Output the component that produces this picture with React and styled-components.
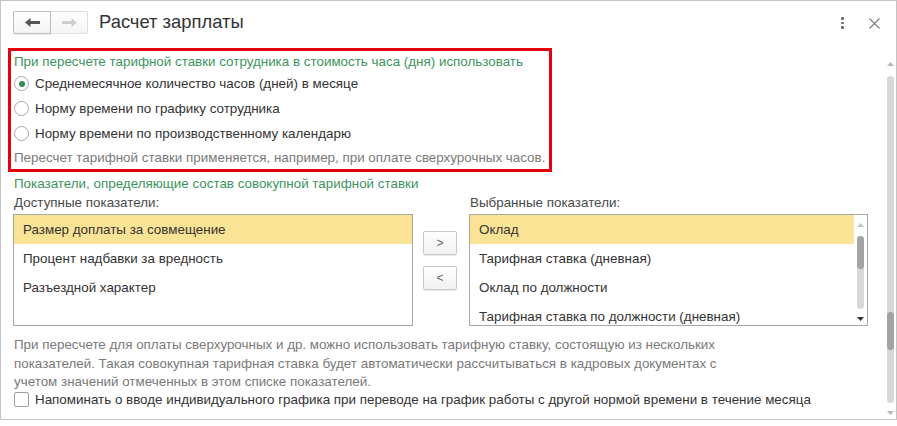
import React from "react";
import styled, { createGlobalStyle } from "styled-components";

const FS = "13.4px";

const GlobalStyle = createGlobalStyle`
  html, body { margin: 0; padding: 0; background: #fff; }
  body { font-family: "Liberation Sans", Arial, sans-serif; color: #333; }
  * { box-sizing: border-box; }
`;

const Window = styled.div`
  width: 897px;
  height: 420px;
  border: 1px solid #c4c4c4;
  display: flex;
  flex-direction: column;
  background: #fff;
  overflow: hidden;
`;

const Header = styled.div`
  height: 46px;
  flex: none;
  display: flex;
  align-items: flex-start;
  padding: 10px 16px 0 12px;
`;

const NavGroup = styled.div`
  display: flex;
`;

const NavButton = styled.div`
  width: ${(p) => (p.$first ? "38px" : "37px")};
  height: 23px;
  display: flex;
  align-items: center;
  justify-content: center;
  background: linear-gradient(#ffffff, #f4f4f4);
  border: 1px solid ${(p) => (p.$active ? "#bdbdbd" : "#dedede")};
  border-left-width: ${(p) => (p.$first ? "1px" : "0")};
  border-radius: ${(p) => (p.$first ? "2px 0 0 2px" : "0 2px 2px 0")};
  box-shadow: ${(p) => (p.$active ? "0 1px 1px rgba(0,0,0,0.08)" : "none")};
`;

const Title = styled.div`
  margin-left: 11px;
  font-size: 18.4px;
  line-height: 21px;
  color: #333;
  flex: 1;
`;

const Kebab = styled.div`
  width: 3px;
  margin-top: 6px;
  display: flex;
  flex-direction: column;
  gap: 2px;
  span {
    width: 2.5px;
    height: 2.5px;
    background: #6a6a6a;
    border-radius: 1px;
  }
`;

const CloseBtn = styled.div`
  margin-left: 25px;
  margin-top: 7px;
  width: 11px;
  height: 11px;
  display: flex;
`;

const Body = styled.div`
  flex: 1;
  display: flex;
  min-height: 0;
`;

const Content = styled.div`
  flex: 1;
  padding-left: 7px;
  display: flex;
  flex-direction: column;
  overflow: hidden;
`;

const RedBox = styled.div`
  width: 544px;
  margin-top: 1px;
  border: 3px solid #e3000f;
  padding: 1px 3px 0 3px;
  display: flex;
  flex-direction: column;
`;

const GroupTitle = styled.div`
  font-size: ${FS};
  color: #3d9460;
  height: ${(p) => p.$h || 19}px;
  line-height: ${(p) => p.$h || 19}px;
  margin-top: ${(p) => p.$mt || 0}px;
  padding-left: ${(p) => p.$pl || 0}px;
  white-space: nowrap;
`;

const RadioRow = styled.div`
  height: 25px;
  display: flex;
  align-items: center;
  gap: 6px;
  font-size: ${FS};
  color: #333;
`;

const RadioCircle = styled.div`
  width: 15px;
  height: 15px;
  border-radius: 50%;
  border: 1px solid #a9a9a9;
  background: #fff;
  display: flex;
  align-items: center;
  justify-content: center;
  &::after {
    content: "";
    width: 6px;
    height: 6px;
    border-radius: 50%;
    background: ${(p) => (p.$checked ? "#2f9158" : "transparent")};
  }
`;

const Note = styled.div`
  height: 23px;
  line-height: 23px;
  font-size: ${FS};
  color: #7a7a7a;
  white-space: nowrap;
`;

const Lower = styled.div`
  padding-left: 5px;
  display: flex;
  flex-direction: column;
`;

const Lists = styled.div`
  display: grid;
  grid-template-columns: 400px 56px 399px;
  grid-template-rows: 18px 112px;
  row-gap: 2px;
`;

const FieldLabel = styled.div`
  font-size: ${FS};
  line-height: 18px;
  color: #4a4a4a;
  padding-left: 1px;
  grid-column: ${(p) => p.$col};
`;

const ListBox = styled.div`
  border: 1px solid #a8a8a8;
  background: #fff;
  overflow: hidden;
  display: flex;
`;

const Items = styled.div`
  flex: 1;
  display: flex;
  flex-direction: column;
`;

const Item = styled.div`
  height: 29px;
  flex: none;
  display: flex;
  align-items: center;
  padding-left: 9px;
  font-size: ${FS};
  color: #333;
  white-space: nowrap;
  background: ${(p) => (p.$selected ? "#fbe395" : "transparent")};
`;

const MoveButtons = styled.div`
  display: flex;
  flex-direction: column;
  gap: 11px;
  padding: 17px 0 0 10px;
`;

const MoveButton = styled.div`
  width: 34px;
  height: 24px;
  border: 1px solid #c9c9c9;
  border-radius: 2px;
  background: linear-gradient(#ffffff, #f1f1f1);
  box-shadow: 0 1px 1px rgba(0, 0, 0, 0.1);
  display: flex;
  align-items: center;
  justify-content: center;
  font-size: 12px;
  color: #666;
`;

const ListScroll = styled.div`
  width: 13px;
  flex: none;
  display: flex;
  flex-direction: column;
  align-items: center;
  padding: 8px 0 4px;
`;

const Track = styled.div`
  width: ${(p) => p.$w}px;
  flex: 1;
  margin: ${(p) => p.$m};
  background: #d8d8d8;
  border-radius: ${(p) => p.$w / 2}px;
  display: flex;
  flex-direction: column;
`;

const Thumb = styled.div`
  height: ${(p) => p.$h}px;
  margin-top: ${(p) => p.$top}px;
  background: #a3a3a3;
  border-radius: 4px;
  flex: none;
`;

const Paragraph = styled.div`
  margin-top: 10px;
  padding-left: 1px;
  font-size: ${FS};
  line-height: 18.5px;
  color: #7a7a7a;
  white-space: nowrap;
`;

const CheckRow = styled.div`
  display: flex;
  align-items: center;
  gap: 6px;
  padding-left: 1px;
  height: 15px;
  font-size: ${FS};
  color: #333;
  white-space: nowrap;
`;

const CheckBox = styled.div`
  width: 15px;
  height: 15px;
  border: 1px solid #a0a0a0;
  border-radius: 2px;
  background: #fff;
`;

const OuterScroll = styled.div`
  width: 8px;
  margin-right: 2px;
  flex: none;
  display: flex;
  flex-direction: column;
  align-items: center;
  padding: 15px 0 4px;
`;

const Arrow = ({ up, color }) => (
  <svg width="7" height="4" viewBox="0 0 7 4" style={{ flex: "none" }}>
    {up ? (
      <polygon points="0,4 7,4 3.5,0" fill={color} />
    ) : (
      <polygon points="0,0 7,0 3.5,4" fill={color} />
    )}
  </svg>
);

const NavArrow = ({ left, color }) => (
  <svg width="15" height="9" viewBox="0 0 15 9">
    {left ? (
      <path d="M0 4.5 L5.5 0 L5.5 3 L15 3 L15 6 L5.5 6 L5.5 9 Z" fill={color} />
    ) : (
      <path d="M15 4.5 L9.5 0 L9.5 3 L0 3 L0 6 L9.5 6 L9.5 9 Z" fill={color} />
    )}
  </svg>
);

export default function App() {
  return (
    <>
      <GlobalStyle />
      <Window>
        <Header>
          <NavGroup>
            <NavButton $first $active>
              <NavArrow left color="#555" />
            </NavButton>
            <NavButton>
              <NavArrow color="#cfcfcf" />
            </NavButton>
          </NavGroup>
          <Title>Расчет зарплаты</Title>
          <Kebab>
            <span />
            <span />
            <span />
          </Kebab>
          <CloseBtn>
            <svg width="11" height="11" viewBox="0 0 11 11">
              <path d="M0.5 0.5 L10.5 10.5 M10.5 0.5 L0.5 10.5" stroke="#7a7a7a" strokeWidth="1.1" />
            </svg>
          </CloseBtn>
        </Header>
        <Body>
          <Content>
            <RedBox>
              <GroupTitle>При пересчете тарифной ставки сотрудника в стоимость часа (дня) использовать</GroupTitle>
              <RadioRow>
                <RadioCircle $checked />
                Среднемесячное количество часов (дней) в месяце
              </RadioRow>
              <RadioRow>
                <RadioCircle />
                Норму времени по графику сотрудника
              </RadioRow>
              <RadioRow>
                <RadioCircle />
                Норму времени по производственному календарю
              </RadioRow>
              <Note>Пересчет тарифной ставки применяется, например, при оплате сверхурочных часов.</Note>
            </RedBox>
            <Lower>
              <GroupTitle $h={20} $mt={2} $pl={1}>
                Показатели, определяющие состав совокупной тарифной ставки
              </GroupTitle>
              <Lists>
                <FieldLabel $col="1">Доступные показатели:</FieldLabel>
                <FieldLabel $col="3">Выбранные показатели:</FieldLabel>
                <ListBox>
                  <Items>
                    <Item $selected>Размер доплаты за совмещение</Item>
                    <Item>Процент надбавки за вредность</Item>
                    <Item>Разъездной характер</Item>
                  </Items>
                </ListBox>
                <MoveButtons>
                  <MoveButton>&gt;</MoveButton>
                  <MoveButton>&lt;</MoveButton>
                </MoveButtons>
                <ListBox>
                  <Items>
                    <Item $selected>Оклад</Item>
                    <Item>Тарифная ставка (дневная)</Item>
                    <Item>Оклад по должности</Item>
                    <Item>Тарифная ставка по должности (дневная)</Item>
                  </Items>
                  <ListScroll>
                    <Arrow up color="#c4c4c4" />
                    <Track $w={7} $m="9px 0 8px">
                      <Thumb $h={33} $top={0} />
                    </Track>
                    <Arrow color="#333" />
                  </ListScroll>
                </ListBox>
              </Lists>
              <Paragraph>
                При пересчете для оплаты сверхурочных и др. можно использовать тарифную ставку, состоящую из нескольких
                <br />
                показателей. Такая совокупная тарифная ставка будет автоматически рассчитываться в кадровых документах с
                <br />
                учетом значений отмеченных в этом списке показателей.
              </Paragraph>
              <CheckRow>
                <CheckBox />
                Напоминать о вводе индивидуального графика при переводе на график работы с другой нормой времени в течение месяца
              </CheckRow>
            </Lower>
          </Content>
          <OuterScroll>
            <Arrow up color="#b8b8b8" />
            <Track $w={7} $m="10px 0 8px">
              <Thumb $h={38} $top={236} />
            </Track>
            <Arrow color="#b8b8b8" />
          </OuterScroll>
        </Body>
      </Window>
    </>
  );
}
